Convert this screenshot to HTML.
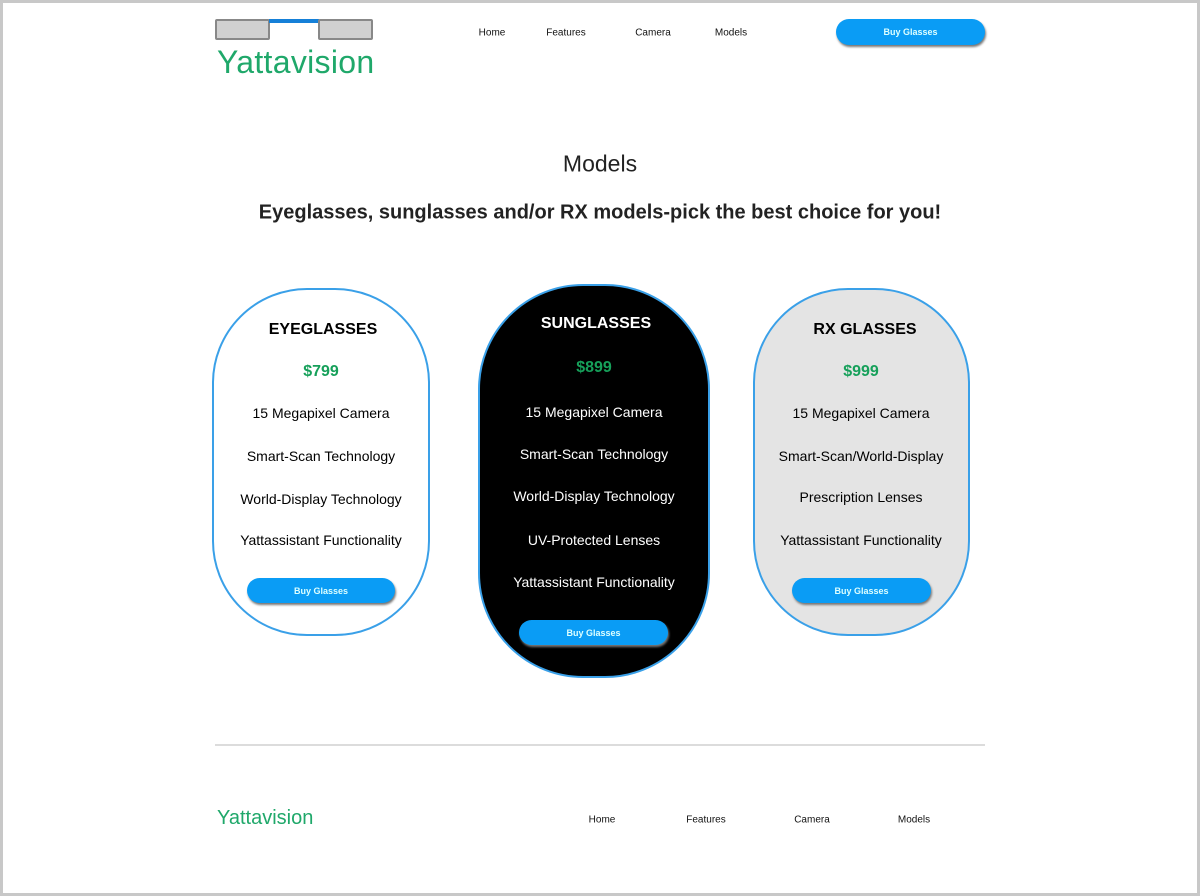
<!DOCTYPE html>
<html><head><style>
*{margin:0;padding:0;box-sizing:border-box}
body{width:1200px;height:896px;background:#fff;font-family:"Liberation Sans",sans-serif;position:relative;overflow:hidden}
.frame{position:absolute;left:0;top:0;width:1200px;height:896px;border:3px solid #c8c8c8}
.a{position:absolute;white-space:nowrap}
.c{transform:translate(-50%,-50%)}
.nav{font-size:10px;color:#111}
.btn{position:absolute;background:#0a9cf5;border-radius:14px;color:#dff;font-size:9px;font-weight:bold;display:flex;align-items:center;justify-content:center;box-shadow:1px 2px 2px #777}
.card{position:absolute;border:2px solid #3aa0e8;border-radius:95px}
.t{font-size:16px;font-weight:bold}
.p{font-size:16px;font-weight:bold;color:#16a05a}
.f{font-size:14px}
</style></head><body>
<div class="frame"></div>
<div class="a" style="left:215px;top:19px;width:55px;height:21px;background:#d0d0d0;border:2px solid #888;border-radius:2px"></div>
<div class="a" style="left:269px;top:19px;width:50px;height:4px;background:#1580d8"></div>
<div class="a" style="left:318px;top:19px;width:55px;height:21px;background:#d0d0d0;border:2px solid #888;border-radius:2px"></div>
<div class="a" style="left:217px;top:44px;font-size:32px;color:#1fa86a;letter-spacing:0.3px">Yattavision</div>
<div class="a c nav" style="left:492px;top:33px">Home</div>
<div class="a c nav" style="left:566px;top:33px">Features</div>
<div class="a c nav" style="left:653px;top:33px">Camera</div>
<div class="a c nav" style="left:731px;top:33px">Models</div>
<div class="btn" style="left:836px;top:19px;width:149px;height:26px">Buy Glasses</div>
<div class="a c" style="left:600px;top:164px;font-size:23px;color:#222">Models</div>
<div class="a c" style="left:600px;top:213px;font-size:20px;font-weight:bold;color:#222">Eyeglasses, sunglasses and/or RX models-pick the best choice for you!</div>

<div class="card" style="left:212px;top:288px;width:218px;height:348px;background:#fff"></div>
<div class="a c t" style="left:323px;top:330px">EYEGLASSES</div>
<div class="a c p" style="left:321px;top:372px">$799</div>
<div class="a c f" style="left:321px;top:413px">15 Megapixel Camera</div>
<div class="a c f" style="left:321px;top:456px">Smart-Scan Technology</div>
<div class="a c f" style="left:321px;top:499px">World-Display Technology</div>
<div class="a c f" style="left:321px;top:540px">Yattassistant Functionality</div>
<div class="btn" style="left:247px;top:578px;width:148px;height:25px">Buy Glasses</div>

<div class="card" style="left:478px;top:284px;width:232px;height:394px;background:#000;border-radius:105px"></div>
<div class="a c t" style="left:596px;top:324px;color:#fff">SUNGLASSES</div>
<div class="a c p" style="left:594px;top:368px">$899</div>
<div class="a c f" style="left:594px;top:412px;color:#fff">15 Megapixel Camera</div>
<div class="a c f" style="left:594px;top:454px;color:#fff">Smart-Scan Technology</div>
<div class="a c f" style="left:594px;top:496px;color:#fff">World-Display Technology</div>
<div class="a c f" style="left:594px;top:540px;color:#fff">UV-Protected Lenses</div>
<div class="a c f" style="left:594px;top:582px;color:#fff">Yattassistant Functionality</div>
<div class="btn" style="left:519px;top:620px;width:149px;height:25px">Buy Glasses</div>

<div class="card" style="left:753px;top:288px;width:217px;height:348px;background:#e4e4e4"></div>
<div class="a c t" style="left:865px;top:330px">RX GLASSES</div>
<div class="a c p" style="left:861px;top:372px">$999</div>
<div class="a c f" style="left:861px;top:413px">15 Megapixel Camera</div>
<div class="a c f" style="left:861px;top:456px">Smart-Scan/World-Display</div>
<div class="a c f" style="left:861px;top:497px">Prescription Lenses</div>
<div class="a c f" style="left:861px;top:540px">Yattassistant Functionality</div>
<div class="btn" style="left:792px;top:578px;width:139px;height:25px">Buy Glasses</div>

<div class="a" style="left:215px;top:744px;width:770px;height:2px;background:#dcdcdc"></div>
<div class="a" style="left:217px;top:807px;font-size:20px;color:#1fa86a">Yattavision</div>
<div class="a c nav" style="left:602px;top:820px">Home</div>
<div class="a c nav" style="left:706px;top:820px">Features</div>
<div class="a c nav" style="left:812px;top:820px">Camera</div>
<div class="a c nav" style="left:914px;top:820px">Models</div>
</body></html>
